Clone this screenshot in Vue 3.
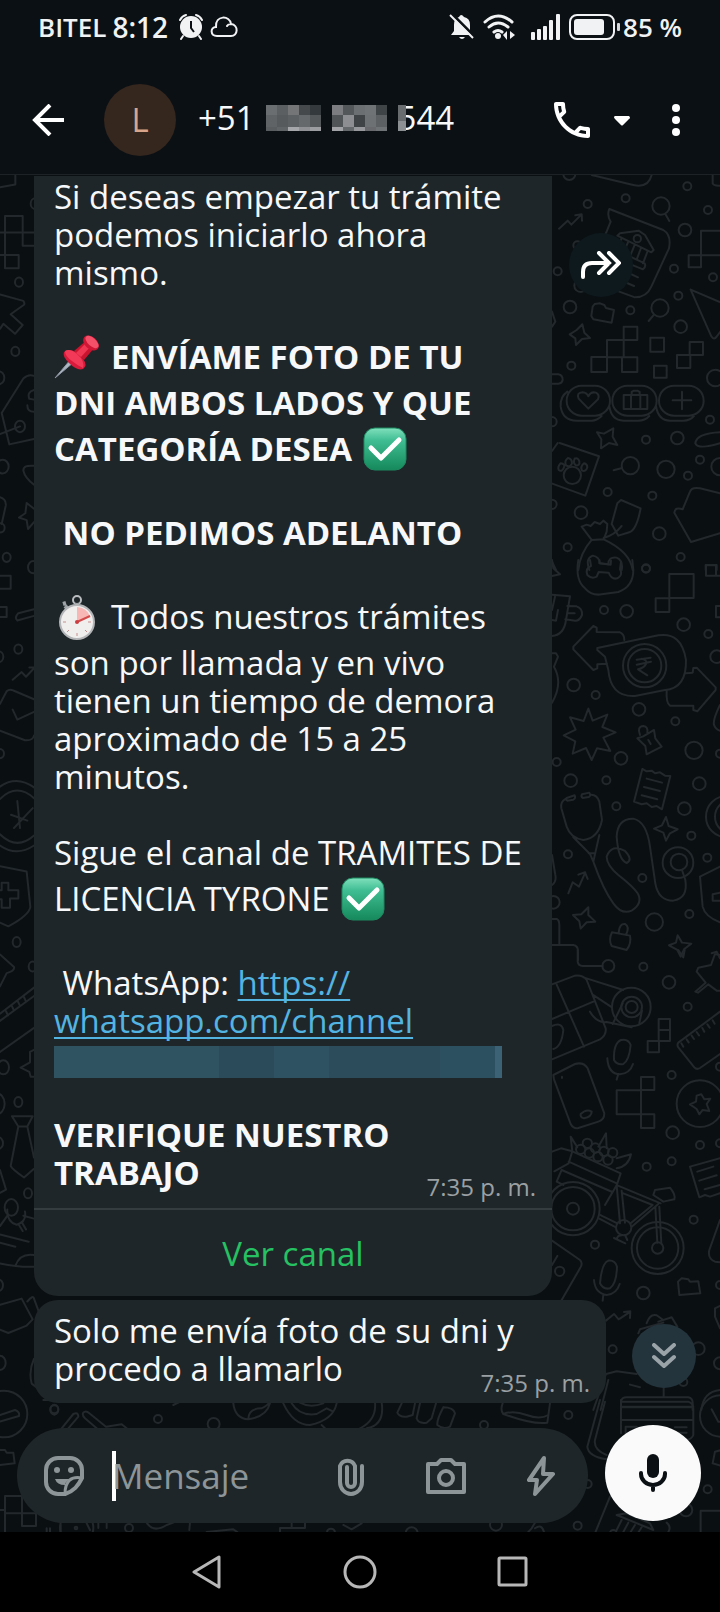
<!-- App.vue -->
<!-- A chat conversation: status bar, contact header, messages, composer and system navigation. -->

<script setup>
import { ref } from 'vue'

const draft = ref('')

// Each entry is one line of the long message. Lines with an emoji are taller.
const messageLines = [
  { text: 'Si deseas empezar tu trámite' },
  { text: 'podemos iniciarlo ahora' },
  { text: 'mismo.' },
  { text: '' },
  { text: 'ENVÍAME FOTO DE TU', bold: true, before: 'pin' },
  { text: 'DNI AMBOS LADOS Y QUE', bold: true },
  { text: 'CATEGORÍA DESEA', bold: true, after: 'check' },
  { text: '' },
  { text: ' NO PEDIMOS ADELANTO', bold: true },
  { text: '' },
  { text: 'Todos nuestros trámites', before: 'watch' },
  { text: 'son por llamada y en vivo' },
  { text: 'tienen un tiempo de demora' },
  { text: 'aproximado de 15 a 25' },
  { text: 'minutos.' },
  { text: '' },
  { text: 'Sigue el canal de TRAMITES DE' },
  { text: 'LICENCIA TYRONE', after: 'check' },
  { text: '' },
]

// Shades of the hidden digits in the phone number, 5 columns by 3 rows
const maskA = ['#6b6e70', '#5c5f61', '#737577', '#45494c', '#34393d', '#606365', '#565a5c', '#5d6062', '#66696b', '#54585a', '#5a5d60', '#616466', '#a6a7ab', '#8f9194', '#9b9da0']
const maskB = ['#7b7d80', '#53575a', '#6c6f71', '#707375', '#3f4447', '#505457', '#8c8e91', '#3f4346', '#6e7173', '#5d6062', '#a1a3a6', '#66696b', '#96989b', '#67696c', '#707376']

// Wallpaper doodles, split in tiles that each have their own coordinates
const tiles = [
  {
    transform: 'translate(540 170) scale(.3333)',
    circles: [[88, 12, 18], [143, 102, 12], [257, 85, 12], [442, 49, 12], [504, 120, 12], [363, 108, 26], [435, 180, 19], [112, 226, 12], [53, 304, 12], [122, 347, 19], [402, 296, 12], [519, 322, 12], [415, 377, 12], [90, 411, 19], [271, 421, 12], [360, 414, 26], [422, 470, 19], [94, 587, 12], [526, 624, 25], [36, 755, 14], [510, 749, 12], [318, 809, 12], [412, 804, 19], [271, 887, 26], [378, 898, 26], [480, 869, 12], [540, 890, 26], [444, 917, 12], [203, 966, 12], [337, 977, 12], [36, 1003, 14], [123, 1028, 19], [358, 1091, 19], [83, 1132, 12], [422, 1161, 12], [318, 1195, 12], [292, 206, 11], [97, 916, 26]],
    paths: [
      'M155 15L280 45Q325 55 335 15M376 132L388 153M57 176L83 152 94 164 124 134M106 136L125 133 126 152M518 15V40Q520 48 540 47',
      'M208 117L370 180Q395 195 387 235L334 350Q320 382 285 382L170 340Q145 325 157 290L212 155Q200 135 208 117Z',
      'M232 197L240 190 296 182 315 195 341 240 334 247ZM244 207L234 232M264 217L250 248M284 225L270 259M303 234L290 269M323 243L309 280M228 240L314 280Q319 290 309 298L220 262M225 290L294 322M213 318L282 348',
      'M158 410L164 402 180 400 193 405 198 414 222 420 215 458 160 448 154 438ZM326 453L342 434M89 493L110 480 127 463 133 488 150 504 126 507 108 525 106 505Z',
      'M251 470H292V510H251ZM201 510H251V562H201ZM154 561H201V606H154ZM246 562H292V606H246ZM331 503H372V545H331ZM342 587H380V623H342ZM449 516H489V555H449ZM411 555H451V594H411ZM483 182H560V256H483ZM446 256H483V292H446Z',
      'M452 359L560 405M452 359L514 499Q522 512 530 500L545 480',
      'M125 647H165A44 44 0 0 1 165 737H125A44 44 0 0 1 125 647M262 647H305A44 44 0 0 1 305 737H262A44 44 0 0 1 262 647M402 647H446A44 44 0 0 1 446 737H402A44 44 0 0 1 402 647M82 665Q60 680 62 710Q68 752 110 752H155Q170 752 185 738M208 708Q214 752 250 752H295Q315 752 328 738M348 708Q355 752 390 752H430Q450 752 462 738',
      'M145 716L116 686Q108 668 128 667Q140 668 145 679Q152 664 168 668Q180 674 174 688ZM251 675H322V717H251ZM273 675V717M301 675V717M275 675V666L282 662H292L299 666V675M426 665V718M398 691H454',
      'M59 819L177 859 136 977 20 935M53 819L36 843M171 787L192 791 220 775 218 800 232 825 207 819 183 835 184 808ZM221 901L246 894M540 787Q470 790 466 820Q474 840 540 820',
      'M62 880Q52 890 56 900Q66 908 72 892Q76 882 62 880M84 864Q72 872 78 886Q90 894 96 880Q96 866 84 864M104 866Q98 880 108 886Q120 888 118 874Q114 862 104 866M132 880Q120 890 126 902Q138 906 142 892Q142 882 132 880',
      'M243 990L302 1015Q290 1080 268 1087L235 1097 215 1062 232 1000ZM191 1108L155 1110 125 1070 140 1064 152 1068 164 1056 180 1062 190 1052 202 1062 200 1085ZM155 1110Q120 1150 115 1200M191 1108Q270 1145 278 1200M191 1104Q225 1095 245 1068',
      'M540 970L480 955Q455 950 450 965L428 1018Q405 1010 403 1028L453 1116 540 1090M148 1200Q135 1165 158 1157Q178 1160 180 1180L205 1183Q205 1160 230 1163Q250 1172 245 1200M36 425L46 455 36 470M36 613H55Q68 615 68 630Q66 640 55 641H36M36 1175L48 1200M497 1200V1185H530V1200',
    ],
  },
  {
    transform: 'translate(540 560) scale(.3333)',
    circles: [[318, 26, 12], [192, 150, 12], [260, 154, 19], [431, 194, 19], [505, 222, 12], [530, 290, 19], [101, 375, 19], [167, 405, 12], [297, 448, 19], [406, 484, 12], [462, 571, 26], [540, 581, 12], [243, 595, 19], [50, 606, 12], [92, 662, 19], [199, 661, 12], [478, 671, 19], [229, 739, 12], [433, 746, 19], [454, 827, 12], [84, 883, 12], [502, 893, 12], [307, 954, 12], [40, 1027, 19], [448, 1062, 12], [343, 1086, 26], [314, 317, 65], [314, 317, 50], [414, 908, 46], [417, 906, 25], [560, 770, 62], [575, 770, 50]],
    paths: [
      'M115 0Q105 60 135 85Q155 108 185 103L235 96Q280 80 280 30L277 0M150 0L153 18Q135 25 142 45Q155 58 170 50L176 36 206 38Q215 60 232 55Q250 45 240 28L243 5M178 0V10L212 14 213 2',
      'M388 42H461V114H388ZM347 115H388V156H347ZM498 16H528V47H498ZM528 47H545V85M545 138H528V172H545',
      'M36 104L90 109 78 180Q72 225 36 228M82 138L110 139Q128 145 126 165Q118 184 105 182L76 178M82 160H104M45 110L36 150M54 150L48 182 36 180M36 0L40 25 60 43 36 48',
      'M201 311L172 313V325L160 330 100 268V260L160 198 170 203V216L240 217Q253 222 253 240M172 264L355 226Q425 215 438 300Q440 385 375 390L285 408Q212 412 205 330L195 290 172 270ZM438 340L458 338 460 324 470 323 527 382V390L472 454 460 450V437H390Q378 430 380 392',
      'M290 299L332 293M290 314L333 305M304 296Q327 302 316 315Q312 323 294 328L322 346',
      'M145 446L158 482 202 464 187 501 227 517 190 533 211 573 171 565 155 600 138 564 98 581 106 544 71 526 107 509 90 472 131 483ZM292 535L308 530 325 520 342 510 346 535 365 560 340 573 320 583 316 558ZM300 525Q290 500 310 498Q325 500 322 518M325 540L332 552',
      'M307 627L320 634 335 632 345 640 360 637 375 647 391 648 366 748 350 738 335 741 320 730 305 733 282 725ZM320 656L366 668M312 681L360 693M305 706L352 718',
      'M80 714L104 706Q108 716 100 719L82 722Q76 718 80 714M126 703L148 698Q154 708 146 711L128 714Q122 710 126 703M78 716Q60 725 64 745L80 800Q92 835 130 840Q175 835 186 780L178 725Q172 705 154 704M100 832L150 882 160 905Q190 990 220 1030Q245 1065 275 1052Q310 1030 293 1000Q280 980 235 945Q200 915 200 890Q215 850 255 873Q280 900 260 909Q235 900 230 830Q232 775 280 776Q320 785 330 860L346 970Q355 1022 400 1022Q445 1015 436 960L426 930M178 825L160 905M146 880H162',
      'M378 771L386 798 413 808 390 820 378 842 370 818 342 806 366 796ZM85 1000L98 967 110 975 117 980 136 937M115 944L135 937 143 957M145 1042L145 1065 166 1085 140 1087 122 1106 118 1084 99 1065 124 1063ZM216 1117L270 1127Q275 1150 260 1170L215 1158Q205 1140 216 1117M236 1118Q238 1090 255 1092Q270 1100 258 1125M413 1126L426 1148 454 1151 432 1168 422 1190 412 1170 387 1156 408 1148Z',
      'M540 920L480 950 488 1040Q495 1070 540 1087M540 998L518 1003V1022H540M36 1077H50Q58 1080 58 1095V1155M36 1155H100Q115 1158 114 1175V1200M36 280H48L54 290 42 320Q70 370 36 428M36 885L46 945Q50 965 36 975M540 435Q518 480 522 495Q528 510 540 512M515 1180L530 1175 540 1195',
    ],
  },
  {
    transform: 'translate(540 950) scale(.3333)',
    circles: [[205, 48, 18], [310, 50, 12], [387, 97, 19], [443, 170, 12], [274, 171, 58], [275, 171, 31], [275, 171, 18], [395, 375, 12], [480, 461, 70], [398, 548, 19], [480, 585, 12], [395, 634, 12], [320, 650, 12], [99, 776, 80], [99, 776, 65], [99, 776, 18], [353, 894, 78], [353, 894, 62], [353, 894, 17], [251, 833, 23], [461, 809, 12], [165, 884, 12], [59, 964, 14], [310, 1029, 19], [218, 1198, 12], [475, 1196, 19], [430, 1296, 12], [540, 350, 12], [540, 580, 12], [540, 1240, 18], [540, 1005, 12], [142, 580, 14], [166, 594, 14], [192, 604, 14], [122, 598, 14], [148, 609, 14], [174, 620, 14], [204, 630, 14], [218, 608, 14]],
    paths: [
      'M113 0V35Q115 48 128 48H188M36 103L105 77Q130 75 140 90L197 235Q200 255 180 268L36 328M50 104L132 290M36 207L160 155M36 228Q65 215 70 240Q65 290 40 297M130 82L250 120M158 134L216 172M150 185Q170 220 200 216L275 232M248 160L218 222M306 182L298 220',
      'M356 207H390V240H356ZM356 240H390V273H356ZM323 273H357V307H323ZM243 270Q220 280 222 330Q230 345 250 342Q268 330 272 285Q265 265 243 270M202 325Q205 372 240 373Q270 370 279 342M235 372L230 389',
      'M303 381H343V420H303ZM303 493H343V534H303ZM230 421H303V493H230ZM40 375L105 342Q130 335 143 355L193 490Q193 510 175 515L115 534Q100 537 92 522L42 388ZM122 492Q140 475 155 485Q155 500 132 505Q120 502 122 492M66 380V384',
      'M484 433L493 448 511 446 500 462 508 483 488 480 478 493 470 477 450 463 468 455 470 437ZM540 185L415 278Q410 285 415 292L463 352Q470 360 480 354L540 312M424 280L430 290M440 268L446 277M455 257L462 267M470 246L477 256M487 234L493 245M502 223L509 233M518 211L524 221M540 15L525 12 513 45 475 53 470 65 497 98 466 125 474 128 505 103 530 122H540',
      'M36 605L63 595 97 604 86 640 43 664M97 604L242 670 230 706 195 765M86 635L230 700M65 660L217 726M65 660L50 695 70 705M97 604L92 560 112 592M175 590L198 550 200 595M230 625L273 613Q265 650 230 655',
      'M230 706L240 820M245 722L255 818M232 706L362 760M250 730L338 765 272 820M355 762L275 830M346 770L352 878M358 770L364 880M180 795L232 820M178 806L228 832M340 735L345 720 390 713Q408 735 403 748L370 755ZM248 855L235 858 230 866M255 855L262 870M222 864L256 880',
      'M540 625L450 650 478 742 495 735 510 740 540 730M472 665L520 650M478 692L530 676M494 718L540 705M540 810L508 900Q502 925 525 935L540 937M36 872L120 930Q130 940 120 955L65 1050M52 918L36 945M0 1050',
      'M205 932Q185 940 180 1000Q190 1020 210 1015Q230 1000 231 950Q225 930 205 932M162 990Q165 1030 200 1035Q230 1032 239 1002M190 1035L188 1052M414 995L425 985 445 988 450 995 475 994 481 1030 418 1035ZM198 1112L222 1092 236 1108 268 1087M252 1086L271 1084 270 1104M320 1120Q330 1090 350 1096L370 1110M355 1115L395 1102 412 1130M295 1150L300 1138 370 1118M540 1068L525 1075V1100L540 1135',
      'M198 1272L230 1264 290 1272M198 1272L160 1380M205 1290L182 1380M270 1304L300 1312M371 1310V1342M243 1380V1355Q245 1342 260 1342H445Q458 1345 458 1358V1380M243 1372H458M484 1380Q490 1325 540 1320M415 0L430 22 434 0',
    ],
  },
  {
    transform: 'translate(0 170) scale(.3333 .3827)',
    circles: [[57, 293, 12], [46, 474, 12], [-4, 543, 17], [60, 670, 15], [8, 775, 18], [20, 1012, 12], [100, 1038, 16], [55, 1252, 12], [0, 1525, 12], [106, 88, 14], [-4, 1272, 14], [2, 935, 12]],
    paths: [
      'M0 45L46 38V15M15 120H68V163H15ZM68 163V198H102M68 163H102M0 163H15V222M0 222H56V257H15V222',
      'M0 325L70 342Q75 348 72 352L32 377 68 405 45 428 10 402 0 415M5 635L70 545Q85 532 102 538M5 635L28 717 102 703M0 690L60 670M102 575Q80 580 88 598L102 600M82 615Q82 632 102 632M0 855Q20 860 17 878L5 925M102 773Q70 770 70 785Q75 805 102 822',
      'M80 870L102 885M80 870L76 897 57 908 80 915 84 938 102 920M0 1060H32V1094H0M0 1142H20V1168H0M102 1148L55 1158Q42 1170 52 1177L102 1165M38 1332L65 1312 78 1324 102 1302M88 1300H102M0 1395L20 1362Q28 1355 40 1360L102 1383M0 1465L75 1490Q98 1492 102 1478M38 1410L52 1436 102 1416',
    ],
  },
  {
    transform: 'translate(0 770) scale(.3333 .4146)',
    circles: [[50, 415, 12], [98, 474, 12], [55, 801, 12], [84, 1021, 12], [10, 717, 17], [-5, 900, 14], [-5, 1243, 14], [0, 1430, 17], [163, 1543, 12], [34, 1055, 20], [-12, 805, 26]],
    paths: [
      'M0 40Q50 12 102 42M0 182Q50 210 102 182M0 70Q50 30 102 68M0 155Q50 195 102 158M52 75L60 140M33 108L82 122M42 140L98 92',
      'M0 232L80 245 91 330Q88 350 25 377L0 368M0 290H5V272H25V290H55V310H30V332H5V312H0M0 445L42 475Q45 485 20 490L0 522M0 588L102 525M0 605L102 545M18 582L24 592M36 570L42 580M54 559L60 569M72 548L78 558M0 680L102 622M102 675L90 680V705L62 718 88 728 92 740H102',
      'M36 835H98L82 860H55ZM55 860L32 955Q35 962 72 983L102 962M82 860L102 935M0 965L18 1012 0 1020M22 1060Q20 1090 50 1097Q80 1090 75 1065M70 1075L102 1082M55 1095L68 1112M65 1090L78 1108M0 1100L25 1072M0 1120L86 1138M0 1140L46 1150M0 1190Q60 1200 102 1198M46 1196Q60 1165 102 1170M0 1290L65 1275 98 1325 80 1340 25 1358 0 1350M82 1282Q100 1265 102 1275L118 1310M102 1420Q85 1450 95 1480L120 1495',
    ],
  },
  {
    transform: 'translate(0 1400) scale(.3333)',
    circles: [[12, 42, 70], [163, 28, 12], [474, 57, 12], [641, 72, 18], [387, 384, 12], [230, 383, 50], [228, 384, 4], [993, 398, 12]],
    paths: [
      'M0 45L45 30Q60 35 57 48L0 65M185 85L220 42Q235 35 235 50L205 85M250 38Q258 30 268 40L318 80 365 73 380 85M250 38Q245 45 255 55L290 85M0 150H15L20 158H40L44 190 0 195',
      'M15 288H66V340H108V378H66V340H15ZM0 330H15V396M140 385V396M150 385V396M182 375V396M260 370L270 390M295 370V384M320 368V384M700 10Q705 55 745 58Q800 50 810 10M745 58Q745 25 785 25Q805 15 808 5M850 10Q880 75 930 75Q1000 60 1010 10M875 10Q900 50 950 42L980 25 1000 35M900 8Q930 25 970 10M965 75L980 90',
      'M440 368Q460 400 500 375L520 368M570 368L568 390M840 395V384H875V368M875 384H915V368M620 396L700 388 712 396M1030 375L1055 388 1085 370M130 0H330M550 0L520 15',
    ],
  },
  {
    transform: 'translate(360 1400) scale(.3333)',
    circles: [[372, 75, 12], [625, 45, 12], [683, 252, 12], [653, 377, 12], [1043, 268, 12], [978, 330, 19], [408, 374, 18], [155, 400, 18], [760, 400, 10], [1082, 48, 62]],
    paths: [
      'M45 8Q50 60 0 85M65 8Q75 75 20 85M125 10L112 38Q118 52 140 50L158 45 165 10M180 10L170 55Q175 72 200 68L215 55 228 10M250 22Q230 60 232 75Q250 90 270 80L285 40Q280 22 250 22M428 10Q420 30 430 42Q520 75 562 68L570 10M430 42Q460 30 500 45Q540 60 565 45',
      'M720 0L682 140Q685 170 740 178M735 5L705 120Q700 150 740 165M783 5H985Q1000 10 1000 25V105Q995 118 980 120M783 0V100M783 20H1000M783 60H1000M797 100V80H830M945 82H980M945 98H980M1055 28L1075 65H1085M1085 150L1065 155 1058 190 1085 198M1022 396V332H1085',
      'M770 345L880 390M770 345L800 340 870 370 880 390M785 360L770 390M805 368L790 396M825 375L812 396M845 382L836 396M750 290L707 395M525 368L515 385 505 396M525 385Q545 370 552 396M920 368Q935 380 925 396',
    ],
  },
]
</script>

<template>
  <div class="phone">
    <div class="status-bar">
      <div class="status-left">
        <span class="carrier">BITEL</span>
        <span class="clock">8:12</span>
        <svg class="alarm" width="26" height="26" viewBox="0 0 26 26">
          <circle cx="13" cy="13" r="11" fill="#f1f2f3" />
          <path d="M2 6Q4 2 8 1M24 6Q22 2 18 1M5 22L3 25M21 22L23 25" stroke="#f1f2f3" stroke-width="2" fill="none" stroke-linecap="round" />
          <path d="M13 7V14L16 18" stroke="#0b1014" stroke-width="2" fill="none" />
        </svg>
        <svg width="28" height="22" viewBox="0 0 28 22" fill="none" stroke="#f1f2f3" stroke-width="2" stroke-linecap="round">
          <path d="M7 20C0 20 0 11 6 11C5 -1 20 -1 21 8C29 9 28 20 21 20ZM21 8Q18 8 17 10" />
        </svg>
      </div>
      <div class="status-right">
        <svg width="26" height="28" viewBox="0 0 26 28">
          <path d="M2 22L5 18V12Q5 5 10 4Q12 0 15 4Q21 5 21 12V18L24 22ZM10 24H16Q13 28 10 24" fill="#f1f2f3" />
          <path d="M2 0L27 25" stroke="#0b1014" stroke-width="3" />
          <path d="M1 2L24 25" stroke="#f1f2f3" stroke-width="2" />
        </svg>
        <svg class="wifi" width="32" height="26" viewBox="0 0 32 26" fill="none" stroke="#f1f2f3" stroke-width="3" stroke-linecap="round">
          <path d="M2 8Q15 -4 29 8M6 13Q15 5 25 13M11 18Q15 15 19 18" />
          <circle cx="15" cy="22" r="3" fill="#f1f2f3" stroke="none" />
          <path d="M20 21L24 17V26M27 26V17L32 21L27 25" fill="#f1f2f3" stroke="none" />
        </svg>
        <svg class="signal" width="30" height="26" viewBox="0 0 30 26" fill="#f1f2f3">
          <rect x="0" y="18" width="4" height="8" rx="1" />
          <rect x="6" y="15" width="4" height="11" rx="1" />
          <rect x="12" y="12" width="4" height="14" rx="1" />
          <rect x="18" y="6" width="4" height="20" rx="1" />
          <rect x="25" y="0" width="4" height="26" rx="1" />
        </svg>
        <svg class="battery" width="52" height="26" viewBox="0 0 52 26">
          <rect x="1" y="1" width="44" height="24" rx="7" fill="none" stroke="#f1f2f3" stroke-width="2" />
          <rect x="5" y="5" width="30" height="16" rx="3" fill="#f1f2f3" />
          <rect x="48" y="9" width="3" height="8" rx="1" fill="#d5d6d8" />
        </svg>
        <span class="percent">85 %</span>
      </div>
    </div>

    <header class="header">
      <button class="icon-btn" aria-label="Atrás">
        <svg width="32" height="32" viewBox="0 0 32 32" fill="none" stroke="#fff" stroke-width="4">
          <path d="M32 16H3M18 1L3 16L18 31" />
        </svg>
      </button>
      <div class="avatar">L</div>
      <h1 class="contact">
        <span>+51</span>
        <span class="mask"><i v-for="(shade, i) in maskA" :key="i" :style="{ background: shade }"></i></span>
        <span class="mask"><i v-for="(shade, i) in maskB" :key="i" :style="{ background: shade }"></i></span>
        <span class="last-digits">544</span>
      </h1>
      <button class="icon-btn call" aria-label="Llamar">
        <svg width="36" height="36" viewBox="3 3 18 18" fill="#fff">
          <path d="M6.54 5c.06.89.21 1.76.45 2.59l-1.2 1.2c-.41-1.2-.67-2.47-.76-3.79h1.51m9.86 12.02c.85.24 1.72.39 2.6.45v1.49c-1.32-.09-2.59-.35-3.8-.75l1.2-1.19M7.5 3H4c-.55 0-1 .45-1 1 0 9.39 7.61 17 17 17 .55 0 1-.45 1-1v-3.49c0-.55-.45-1-1-1-1.24 0-2.45-.2-3.57-.57-.1-.04-.21-.05-.31-.05-.26 0-.51.1-.71.29l-2.2 2.2c-2.83-1.45-5.15-3.76-6.59-6.59l2.2-2.2c.28-.28.36-.67.25-1.02C8.7 6.45 8.5 5.25 8.5 4c0-.55-.45-1-1-1z" />
        </svg>
      </button>
      <button class="icon-btn" aria-label="Opciones de llamada">
        <svg width="16" height="12" viewBox="0 0 16 12" fill="#fff">
          <path d="M1 2H15Q17 4 15 5L9 11Q8 12 7 11L1 5Q-1 3 1 2" />
        </svg>
      </button>
      <button class="icon-btn more" aria-label="Más opciones">
        <svg width="8" height="32" viewBox="0 0 8 32" fill="#fff">
          <circle cx="4" cy="4" r="4" />
          <circle cx="4" cy="16" r="4" />
          <circle cx="4" cy="28" r="4" />
        </svg>
      </button>
    </header>

    <main class="chat">
      <svg class="wallpaper" viewBox="0 175 720 1357" preserveAspectRatio="xMidYMin slice" aria-hidden="true">
        <g v-for="(tile, i) in tiles" :key="i" :transform="tile.transform">
          <circle v-for="(c, j) in tile.circles" :key="'c' + j" :cx="c[0]" :cy="c[1]" :r="c[2]" />
          <path v-for="(d, j) in tile.paths" :key="'p' + j" :d="d" />
        </g>
      </svg>

      <div class="messages">
        <div class="message-row">
          <article class="bubble bubble-long">
            <div class="body">
              <div
                v-for="(line, i) in messageLines"
                :key="i"
                class="line"
                :class="{ bold: line.bold, tall: line.before || line.after }"
              >
                <svg v-if="line.before === 'pin'" width="46" height="46" viewBox="0 0 46 46">
                  <path d="M1 44L17 25L20 28Z" fill="#aeb6c2" stroke="#8e97a5" />
                  <path d="M20 17L33 6L41 13L30 26Z" fill="#c9142f" />
                  <path d="M10 18Q14 14 22 18L29 25Q34 31 29 35Q23 37 15 29Q8 22 10 18Z" fill="#d81b3c" />
                  <path d="M11 17Q16 14 23 20Q31 27 29 34Q23 31 18 27Q11 22 11 17Z" fill="#f23a58" />
                  <path d="M22 19L33 8L37 12L27 23Z" fill="#ee3552" />
                  <ellipse cx="37" cy="9" rx="9" ry="6" transform="rotate(42 37 9)" fill="#cf1635" />
                  <ellipse cx="38" cy="8" rx="8" ry="4" transform="rotate(42 38 8)" fill="#f4506a" />
                </svg>
                <svg v-if="line.before === 'watch'" width="46" height="46" viewBox="0 0 46 46">
                  <circle cx="23" cy="6" r="4" fill="none" stroke="#b9bdc0" stroke-width="2" />
                  <path d="M23 9V13M11 12L14 15M9 10L12 9" stroke="#9da3a7" stroke-width="4" />
                  <circle cx="23" cy="28" r="17" fill="#f1eeee" stroke="#b3b5b6" stroke-width="2" />
                  <path d="M23 28V13A15 15 0 0 1 36 22Z" fill="#f7b8b5" />
                  <path d="M23 28L36 22" stroke="#d44b4c" stroke-width="2" />
                  <circle cx="23" cy="28" r="2" fill="#cc3e41" />
                  <path d="M23 39V42M9 28H12M34 28H37M13 38L15 36M33 38L31 36" stroke="#c58f8f" />
                </svg>
                <span>{{ line.text }}</span>
                <svg v-if="line.after === 'check'" width="44" height="44" viewBox="0 0 44 44">
                  <defs>
                    <linearGradient :id="'check' + i" x1="0" y1="0" x2="0" y2="1">
                      <stop offset="0" stop-color="#7fe0bd" />
                      <stop offset=".3" stop-color="#3fbd92" />
                      <stop offset="1" stop-color="#15895b" />
                    </linearGradient>
                  </defs>
                  <rect x="1" y="1" width="42" height="42" rx="11" :fill="`url(#check${i})`" stroke="#1d8a61" />
                  <path d="M8 21L18 31L36 13" fill="none" stroke="#fff" stroke-width="5" stroke-linecap="round" stroke-linejoin="round" />
                </svg>
              </div>
              <div class="line"> WhatsApp: <a href="#">https://</a></div>
              <div class="line"><a href="#">whatsapp.com/channel</a></div>
              <div class="line hidden-line"><a href="#" class="hidden-link" aria-label="Enlace del canal"></a></div>
              <div class="line"></div>
              <div class="line bold">VERIFIQUE NUESTRO</div>
              <div class="last-line">
                <div class="line bold">TRABAJO</div>
                <time>7:35 p. m.</time>
              </div>
            </div>
            <button class="channel-btn">Ver canal</button>
          </article>
          <button class="forward" aria-label="Reenviar">
            <svg width="40" height="28" viewBox="0 0 40 28" fill="none" stroke="#fff" stroke-width="4" stroke-linecap="round">
              <path d="M2 26V21Q2 12 11 12H28M18 2L28 12L18 22M28 2L38 12L28 22" />
            </svg>
          </button>
        </div>

        <article class="bubble bubble-short">
          <div class="line">Solo me envía foto de su dni y</div>
          <div class="last-line">
            <div class="line">procedo a llamarlo</div>
            <time>7:35 p. m.</time>
          </div>
        </article>

        <button class="scroll-down" aria-label="Ir al final">
          <svg width="24" height="26" viewBox="0 0 24 26" fill="none" stroke="#9aa3a8" stroke-width="4" stroke-linecap="round" stroke-linejoin="round">
            <path d="M2 2L12 11L22 2M2 14L12 23L22 14" />
          </svg>
        </button>
      </div>

      <form class="composer" @submit.prevent>
        <div class="input-pill">
          <button type="button" class="icon-btn" aria-label="Stickers">
            <svg width="40" height="40" viewBox="0 0 40 40" fill="none" stroke="#8d9598" stroke-width="4">
              <path d="M14 2H26A12 12 0 0 1 38 14V22C34 30 30 35 21 38H14A12 12 0 0 1 2 26V14A12 12 0 0 1 14 2Z" />
              <path d="M38 22C28 20 21 24 21 38" stroke-width="3" />
              <path d="M11 23H26Q21 26 21 29Q13 29 11 23Z" fill="#8d9598" stroke="none" />
              <circle cx="13" cy="14" r="3" fill="#8d9598" stroke="none" />
              <circle cx="27" cy="14" r="3" fill="#8d9598" stroke="none" />
            </svg>
          </button>
          <span class="caret"></span>
          <input v-model="draft" type="text" placeholder="Mensaje" aria-label="Mensaje" />
          <button type="button" class="icon-btn" aria-label="Adjuntar">
            <svg width="28" height="40" viewBox="0 0 28 40" fill="none" stroke="#8d9598" stroke-width="4" stroke-linecap="round">
              <path d="M25 10V26A11 12 0 0 1 3 26V10A8 8 0 0 1 18 10V27A4 4 0 0 1 10 27V11" />
            </svg>
          </button>
          <button type="button" class="icon-btn" aria-label="Cámara">
            <svg width="40" height="40" viewBox="0 0 40 40" fill="none" stroke="#8d9598" stroke-width="4" stroke-linejoin="round">
              <path d="M2 8H11L15 4H25L29 8H38V36H2Z" />
              <circle cx="20" cy="22" r="7" />
            </svg>
          </button>
          <button type="button" class="icon-btn" aria-label="Respuestas rápidas">
            <svg width="28" height="40" viewBox="0 0 28 40" fill="none" stroke="#8d9598" stroke-width="4" stroke-linejoin="round">
              <path d="M17 2L2 24H10L8 38L26 18H16Z" />
            </svg>
          </button>
        </div>
        <button type="button" class="mic" aria-label="Grabar mensaje de voz">
          <svg width="28" height="38" viewBox="0 0 28 38">
            <rect x="8" y="0" width="12" height="24" rx="6" fill="#0b1014" />
            <path d="M2 19V20A12 11 0 0 0 26 20V19M14 31V36" fill="none" stroke="#0b1014" stroke-width="4" stroke-linecap="round" />
          </svg>
        </button>
      </form>
    </main>

    <nav class="system-nav">
      <button class="icon-btn" aria-label="Volver">
        <svg width="34" height="34" viewBox="0 0 34 34" fill="none" stroke="#b7b7b7" stroke-width="3" stroke-linejoin="round">
          <path d="M4 17L29 2V32Z" />
        </svg>
      </button>
      <button class="icon-btn" aria-label="Inicio">
        <svg width="34" height="34" viewBox="0 0 34 34" fill="none" stroke="#b7b7b7" stroke-width="3">
          <circle cx="17" cy="17" r="15" />
        </svg>
      </button>
      <button class="icon-btn" aria-label="Recientes">
        <svg width="34" height="34" viewBox="0 0 34 34" fill="none" stroke="#b7b7b7" stroke-width="3" stroke-linejoin="round">
          <rect x="3" y="3" width="27" height="27" rx="1" />
        </svg>
      </button>
    </nav>
  </div>
</template>

<style>
body {
  background: #000;
}
</style>

<style scoped>
.phone {
  display: flex;
  flex-direction: column;
  min-height: 100vh;
  background: #0b1014;
  color: #f7f8fa;
  font-family: "Open Sans", "Liberation Sans", sans-serif;
}

button {
  padding: 0;
  border: none;
  background: none;
  color: inherit;
  font: inherit;
  cursor: pointer;
}

svg {
  display: block;
  flex-shrink: 0;
}

.icon-btn {
  flex-shrink: 0;
}

/* Status bar */
.status-bar {
  display: flex;
  justify-content: space-between;
  align-items: center;
  height: 54px;
  padding: 0 38px;
  color: #f1f2f3;
  font-size: 26px;
  font-weight: 600;
}

.status-left,
.status-right {
  display: flex;
  align-items: center;
}

.status-left {
  gap: 6px;
}

.alarm {
  margin-left: 4px;
}

.clock {
  font-size: 28px;
}

.status-right {
  gap: 8px;
}

.signal {
  margin-left: 8px;
}

.percent {
  margin-left: -6px;
}

/* Contact header */
.header {
  display: flex;
  align-items: center;
  padding: 12px 40px 0 32px;
  height: 108px;
  border-bottom: 1px solid #1c2226;
}

.avatar {
  width: 72px;
  height: 72px;
  margin: 0 22px 0 40px;
  border-radius: 50%;
  background: #35261e;
  color: #d9a58a;
  font-size: 33px;
  line-height: 72px;
  text-align: center;
}

.contact {
  display: flex;
  align-items: center;
  gap: 11px;
  margin: 0;
  padding-bottom: 4px;
  font-size: 33px;
  font-weight: 400;
  line-height: 40px;
}

.mask {
  display: grid;
  grid-template-columns: repeat(5, 11px);
  grid-template-rows: 10px 12px 4px;
}

.last-digits {
  position: relative;
}

.last-digits::before {
  content: '';
  position: absolute;
  left: 0;
  top: 7px;
  width: 8px;
  height: 26px;
  background: linear-gradient(#696c6e 60%, #8d9092 60%);
}

.call {
  margin-left: auto;
  margin-right: 24px;
}

.more {
  margin-left: 42px;
}

/* Chat */
.chat {
  position: relative;
  display: flex;
  flex: 1;
  flex-direction: column;
  justify-content: flex-end;
  background: #0a0f12;
}

.wallpaper {
  position: absolute;
  inset: 0;
  width: 100%;
  height: 100%;
  fill: none;
  stroke: #22282b;
  stroke-width: 2px;
  stroke-linejoin: round;
  stroke-linecap: round;
}

.wallpaper circle,
.wallpaper path {
  vector-effect: non-scaling-stroke;
}

.messages {
  position: relative;
  display: flex;
  flex-direction: column;
  align-items: flex-start;
  gap: 4px;
  padding: 0 34px;
}

.message-row {
  display: flex;
  align-items: flex-start;
  gap: 17px;
}

.bubble {
  background: #1f2629;
  font-size: 33px;
}

.bubble-long {
  width: 518px;
  border-radius: 0 0 24px 24px;
}

.body {
  padding: 2px 16px 16px 20px;
}

.line {
  min-height: 38px;
  line-height: 38px;
  white-space: pre;
}

.tall {
  display: flex;
  align-items: center;
  gap: 11px;
  min-height: 54px;
}

.bold {
  font-weight: 700;
}

.line a {
  color: #53b4e2;
  text-decoration: underline;
  text-decoration-thickness: 2px;
  text-decoration-skip-ink: none;
  text-underline-offset: 4px;
}

.hidden-line {
  display: flex;
  align-items: flex-end;
}

.hidden-line .hidden-link {
  width: 448px;
  height: 32px;
  background: linear-gradient(90deg, #2f5361 0 165px, #2b4b5a 165px 220px, #2e5262 220px 275px, #2c4c5b 275px 386px, #2c5060 386px 441px, #3b6275 441px);
}

.last-line {
  display: flex;
  justify-content: space-between;
  align-items: flex-end;
}

time {
  color: #9aa0a3;
  font-size: 24px;
  line-height: 30px;
}

.body time {
  margin-bottom: -10px;
}

.channel-btn {
  display: block;
  width: 100%;
  height: 88px;
  border-top: 2px solid #353c40;
  color: #25c162;
}

.forward {
  display: grid;
  place-items: center;
  width: 64px;
  height: 64px;
  margin-top: 57px;
  border-radius: 50%;
  background: #0e191e;
}

.bubble-short {
  width: 536px;
  padding: 12px 16px 15px 20px;
  border-radius: 24px;
}

.bubble-short time {
  margin-bottom: -10px;
}

.scroll-down {
  position: absolute;
  right: 24px;
  bottom: 15px;
  display: grid;
  place-items: center;
  width: 64px;
  height: 64px;
  border-radius: 50%;
  background: #24343c;
}

/* Composer */
.composer {
  position: relative;
  display: flex;
  align-items: flex-end;
  gap: 17px;
  min-height: 98px;
  padding: 22px 19px 9px 17px;
}

.input-pill {
  display: flex;
  flex: 1;
  align-items: center;
  gap: 61px;
  min-width: 0;
  height: 95px;
  padding: 0 33px 0 27px;
  box-sizing: border-box;
  border-radius: 48px;
  background: #1f2629;
}

.caret {
  flex-shrink: 0;
  width: 4px;
  height: 50px;
  margin: 0 -65px 0 -33px;
  background: #fff;
}

input {
  flex: 1;
  min-width: 0;
  padding: 0;
  border: none;
  outline: none;
  background: none;
  color: #f7f8fa;
  font: inherit;
  font-size: 35px;
}

input::placeholder {
  color: #8d9598;
  opacity: 1;
}

.mic {
  display: grid;
  flex-shrink: 0;
  align-self: flex-start;
  place-items: center;
  width: 96px;
  height: 96px;
  border-radius: 50%;
  background: #fafafa;
}

/* System navigation */
.system-nav {
  display: flex;
  justify-content: center;
  align-items: center;
  gap: 119px;
  height: 80px;
  background: #000;
}
</style>
